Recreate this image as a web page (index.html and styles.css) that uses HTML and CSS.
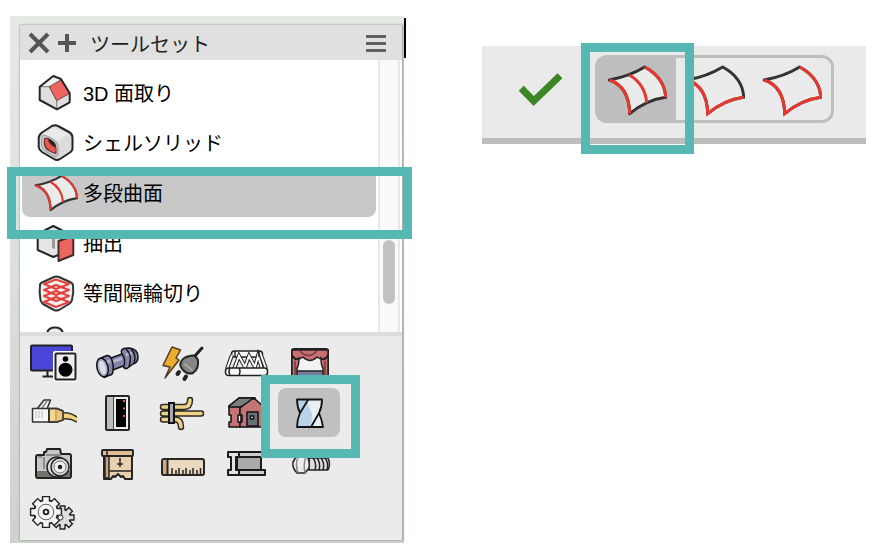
FILE: index.html
```
<!DOCTYPE html>
<html lang="ja">
<head>
    <meta charset="UTF-8">
    <meta name="viewport" content="width=device-width, initial-scale=1.0">
    <title>ツールセット</title>
    <link rel="stylesheet" href="styles.css">
</head>
<body>
    <!-- Shared surface patch outlines -->
    <svg class="sprite" aria-hidden="true">
        <symbol id="surface-multi" viewBox="0 0 60 60">
            <path d="M2.3 21Q22 17.5 37.7 8Q57.8 19 58.700 38.3Q39 41 22.7 54.7Q22 27.5 2.3 21Z" fill="#ebebeb" stroke="#333" stroke-width="3" stroke-linejoin="round"/>
            <path d="M2.3 21Q22 27.5 22.7 54.7M37.7 8Q57.8 19 58.7 38.3M22.3 16Q38 25 39.7 43.7" fill="none" stroke="#e5392f" stroke-width="3"/>
        </symbol>
        <symbol id="surface-two" viewBox="0 0 60 60">
            <path d="M2.3 21Q22 17.5 37.7 8Q57.8 19 58.7 38.3Q39 41 22.7 54.7Q22 27.5 2.3 21Z" fill="#ebebeb" stroke="#333" stroke-width="3" stroke-linejoin="round"/>
            <path d="M2.3 21Q22 27.5 22.7 54.7Q39 41 58.7 38.3" fill="none" stroke="#e5392f" stroke-width="3"/>
        </symbol>
        <symbol id="surface-three" viewBox="0 0 60 60">
            <path d="M2.3 21Q22 17.5 37.7 8Q57.8 19 58.7 38.3Q39 41 22.7 54.7Q22 27.5 2.3 21Z" fill="#ebebeb" stroke="#333" stroke-width="3" stroke-linejoin="round"/>
            <path d="M2.3 21Q22 27.5 22.7 54.7Q39 41 58.7 38.3Q57.8 19 37.7 8" fill="none" stroke="#e5392f" stroke-width="3"/>
        </symbol>
    </svg>

    <main class="page">
        <section class="palette">
            <div class="window">
                <header class="title-bar">
                    <button class="title-button" type="button" aria-label="閉じる">
                        <svg width="22" height="22" viewBox="0 0 22 22"><path d="M2 2L20 20M20 2L2 20" stroke="#555" stroke-width="4"/></svg>
                    </button>
                    <button class="title-button" type="button" aria-label="追加">
                        <svg width="18" height="18" viewBox="0 0 18 18"><path d="M9 0V18M0 9H18" stroke="#555" stroke-width="4"/></svg>
                    </button>
                    <h1>ツールセット</h1>
                    <button class="title-button menu-button" type="button" aria-label="メニュー">
                        <svg width="22" height="18" viewBox="0 0 22 18"><path d="M1 2.5H21M1 9.5H21M1 16.5H21" stroke="#606060" stroke-width="3"/></svg>
                    </button>
                </header>

                <div class="tool-area">
                    <ul class="tool-list">
                        <li><button class="tool" type="button">
                            <svg class="tool-icon" viewBox="0 0 44 44" stroke-linejoin="round">
                                <path d="M5.7 16.7L19.3 6L27 9L35.7 23.3V32.3L23 39.3L5.7 30Z" fill="#dedede"/>
                                <path d="M5.7 16.7L19.3 6L27 9L15.3 16.7Z" fill="#efefef"/>
                                <path d="M5.7 16.7H15.3L22.7 30.7V39" fill="none" stroke="#777" stroke-width="1"/>
                                <path d="M15.3 16.7L27 10L35.7 23.3L22.7 30.7Z" fill="#ee645e" stroke="#784440" stroke-width="1"/>
                                <path d="M5.7 16.7L19.3 6L27 9L35.7 23.3V32.3L23 39.3L5.7 30Z" fill="none" stroke="#252525" stroke-width="2"/>
                            </svg>
                            <span>3D 面取り</span>
                        </button></li>
                        <li><button class="tool" type="button">
                            <svg class="tool-icon" viewBox="0 0 44 44">
                                <path d="M4.7 18Q5 14.500 8 12.500L18 6Q21 4.500 24 6L35 12Q38.500 14 38.500 18V28Q38.500 31 36 32.5L26 39Q23 41 20 39L8 32Q5 30 4.7 27Z" fill="#dcdcdc" stroke="#252525" stroke-width="2"/>
                                <path d="M9 14L20 8L34 14L24 21Z" fill="#eaeaea"/>
                                <path d="M7.5 18Q8 14 13 16L19 19Q24 22 24 28V34Q24 38 19 36L11 31Q8 29 7.5 25Z" fill="#c6c6c6" stroke="#999" stroke-width="1"/>
                                <path d="M10 19Q11 17 14 18Q21 21 22 26V34L13 30Q9 26 10 19Z" fill="#222"/>
                                <path d="M10.5 18.500L14 18.500Q15 25 22 27.500V33.500Q12 31 10.5 24Z" fill="#e65750" stroke="#742f2c" stroke-width="1"/>
                            </svg>
                            <span>シェルソリッド</span>
                        </button></li>
                        <li><button class="tool selected" type="button" aria-pressed="true">
                            <svg class="tool-icon"><use href="#surface-multi"/></svg>
                            <span>多段曲面</span>
                        </button></li>
                        <li><button class="tool" type="button">
                            <svg class="tool-icon" viewBox="0 0 44 44" stroke-linejoin="round">
                                <path d="M3.7 14L19.3 6L35 14V32L19.3 37L3.7 30Z" fill="#e5e5e5"/>
                                <path d="M18 15H21V29L18 28Z" fill="#999"/>
                                <path d="M24 35L19.3 37L3.7 30V14L19.3 6L35 14" fill="none" stroke="#252525" stroke-width="2"/>
                                <path d="M24.5 21L39.3 16V35L24.5 41Z" fill="#ee645e" stroke="#402c2c" stroke-width="2"/>
                            </svg>
                            <span>抽出</span>
                        </button></li>
                        <li><button class="tool" type="button">
                            <svg class="tool-icon" viewBox="0 0 44 44" stroke-linejoin="round">
                                <path d="M6 15Q6 13 9 12L20 7Q22 6 25 7L36 12Q38.5 13 39 15Q40 22 38 30Q37.5 32 35 34L25 40Q22 41 20 40L9 34Q7 32 6.5 30Q5 22 6 15Z" fill="#eee" stroke="#333" stroke-width="2"/>
                                <g fill="none" stroke="#e2413b" stroke-width="2">
                                    <path d="M10 14L22 9.5L35 14L22 19Z"/>
                                    <path d="M10 20L22 15L35 20L22 25Z"/>
                                    <path d="M10 26L22 21L35 26L22 31Z"/>
                                    <path d="M10 32L22 27L35 32L22 37Z"/>
                                </g>
                            </svg>
                            <span>等間隔輪切り</span>
                        </button></li>
                        <li><button class="tool" type="button" aria-label="次のツール">
                            <svg class="tool-icon" viewBox="0 0 44 44"><path d="M13 15Q13 7.5 21 7.5Q29 7.5 29 15" fill="#eee" stroke="#252525" stroke-width="2"/></svg>
                        </button></li>
                    </ul>
                    <div class="scroll-track"><div class="scroll-thumb"></div></div>
                </div>

                <div class="toolsets">
                    <button class="toolset" type="button" aria-label="映像と音響">
                        <svg width="48" height="40" viewBox="0 0 48 40">
                            <rect x="2" y="3.500" width="41" height="25" rx="1" fill="#4a46d8" stroke="#222" stroke-width="2"/>
                            <path d="M18.500 29V34.5M13.5 34.5H25" stroke="#222" stroke-width="2"/>
                            <rect x="24" y="9" width="24" height="31" rx="2" fill="#fff"/>
                            <rect x="26.500" y="11.500" width="20" height="26" rx="1" fill="#eee" stroke="#222" stroke-width="2"/>
                            <circle cx="36.5" cy="17" r="2.8"/><circle cx="36.5" cy="27.700" r="7"/>
                        </svg>
                    </button>
                    <button class="toolset" type="button" aria-label="配管">
                        <svg width="48" height="40" viewBox="0 0 48 40" stroke="#111" stroke-width="1.5" stroke-linejoin="round">
                            <path d="M8 16L14 13.500Q17 13.500 18 16L29 12Q27 8 31 6.500L36 6Q45 7 45 15Q45 21 40 22L34 26.500Q31 27 30 24L20 28Q20 33 17 33L11 35.500Z" fill="#8384aa"/>
                            <path d="M19 20L29 16.500M14 20L17 19M33 13L39 11" stroke="#b3b4cd" stroke-width="3" fill="none"/>
                            <path d="M18 16Q21 22 20 28M29 12Q33 17 31 24M33 7Q40 13 36 25M38 7Q44 13 41 21" fill="none"/>
                            <ellipse cx="9.500" cy="25.5" rx="5.5" ry="9.5" transform="rotate(-14 9.500 25.5)" fill="#a9aac4"/>
                            <ellipse cx="9.500" cy="25.5" rx="3" ry="7" transform="rotate(-14 9.500 25.5)" fill="#dddde9" stroke="none"/>
                        </svg>
                    </button>
                    <button class="toolset" type="button" aria-label="電気">
                        <svg width="48" height="40" viewBox="0 0 48 40" stroke-linejoin="round" stroke-linecap="round">
                            <path d="M15 5L23.5 8L19 16L22 18L8 36L13 25L6 23.500Z" fill="#edac2d" stroke="#4d3d20" stroke-width="1.5"/>
                            <path d="M37 15L45 6" fill="none" stroke="#222" stroke-width="3"/>
                            <path d="M33 14Q38 12 41 18Q42 27 36 31Q31 33 26 28Q22 24 24 20Q26 15 33 14Z" fill="#858585" stroke="#252525" stroke-width="2"/>
                            <path d="M28 22L35 28" fill="none" stroke="#b5b5b5" stroke-width="1.5"/>
                            <path d="M22 30L20.500 32M29 34.500L27.5 37" stroke="#222" stroke-width="4"/>
                        </svg>
                    </button>
                    <button class="toolset" type="button" aria-label="トラス">
                        <svg width="48" height="40" viewBox="0 0 48 40" fill="#f8f8f8" stroke="#222" stroke-width="1.5">
                            <rect x="10.500" y="9" width="31" height="6" rx="3"/>
                            <path d="M11 13L6 27M40 13L45 27M13 27L18 14L24 25L28 14L34 25L37 14L41 27" fill="none" stroke-width="4"/>
                            <path d="M11 13L6 27M40 13L45 27M13 27L18 14L24 25L28 14L34 25L37 14L41 27" fill="none" stroke="#fff" stroke-width="2"/>
                            <rect x="4.500" y="26" width="42" height="7.500" rx="3"/>
                            <path d="M9 26Q7 29 9 33M18 26Q20 29 18 33M14 9V15M38 9V15" fill="none"/>
                        </svg>
                    </button>
                    <button class="toolset" type="button" aria-label="舞台">
                        <svg width="48" height="40" viewBox="0 0 48 40" stroke="#222" stroke-width="1.5">
                            <rect x="7" y="7" width="36" height="31" rx="2" fill="#f3f3f3" stroke-width="2"/>
                            <path d="M10 29H40V38H10Z" fill="#787a9d"/>
                            <path d="M7 8H43V13Q39 20 32 15Q25 22 18 15Q11 20 7 13Z" fill="#c96f72"/>
                            <path d="M7 13Q10 20 14 16Q14 23 12 26V38H7ZM43 13Q40 20 36 16Q36 23 38 26V38H43Z" fill="#c96f72"/>
                            <path d="M15 9Q23 18 32 9M10 19V35M40 19V35" fill="none" stroke="#713c40"/>
                        </svg>
                    </button>
                    <button class="toolset" type="button" aria-label="ネットワーク">
                        <svg width="48" height="40" viewBox="0 0 48 40" stroke="#333" stroke-width="1.5" stroke-linejoin="round">
                            <path d="M34 20Q40 19 48 24V29Q41 25 34 26Z" fill="#f0d47b" stroke="none"/>
                            <path d="M34 20Q40 19 48 24M34 26Q41 25 48 29" fill="none"/>
                            <path d="M8 16L15 7L21.5 7L18 16Z" fill="#eee"/>
                            <path d="M13 15L18 8" stroke="#888"/>
                            <path d="M3.5 15.5H20V29H3.5Z" fill="#f6f6f6"/>
                            <path d="M7 18V25M10 18V25M13 18V25" stroke="#bbb" stroke-width="1"/>
                            <path d="M20 15.5H28L34 18V27L28 29H20Z" fill="#f0d88c"/>
                            <path d="M27 16V29L34 27V18Z" fill="#eac581" stroke="#c79c55"/>
                            <path d="M20 15.5H28L34 18V27L28 29H20Z" fill="none"/>
                        </svg>
                    </button>
                    <button class="toolset" type="button" aria-label="ラック">
                        <svg width="48" height="40" viewBox="0 0 48 40">
                            <rect x="13" y="3" width="23" height="34" rx="1" fill="#eee" stroke="#252525" stroke-width="2"/>
                            <path d="M14 4H20V36H14Z" fill="#bdbdbd"/><path d="M20.5 4V36" stroke="#444"/>
                            <rect x="23" y="6" width="10" height="28"/>
                            <path d="M30 8H32M30 15.5H32M30 23H32" stroke="#e84b4b" stroke-width="2"/>
                        </svg>
                    </button>
                    <button class="toolset" type="button" aria-label="ケーブル">
                        <svg width="48" height="40" viewBox="0 0 48 40" fill="none" stroke-linecap="round">
                            <path d="M6 14H27Q33 14 33 7M6 20.5H44M6 26.5H18Q24 26.5 24 34" stroke="#2e2a24" stroke-width="6.5"/>
                            <path d="M6 14H27Q33 14 33 7M6 20.5H44M6 26.5H18Q24 26.5 24 34" stroke="#efd28a" stroke-width="3.5"/>
                            <rect x="12" y="10" width="5" height="20" fill="#aaa" stroke="#111" stroke-width="2"/>
                        </svg>
                    </button>
                    <button class="toolset" type="button" aria-label="建築">
                        <svg width="48" height="40" viewBox="0 0 48 40" stroke="#111" stroke-width="1.5" stroke-linejoin="round">
                            <path d="M8 13L18 5H34L25 13H19V34H8V29H10V22H8Z" fill="#c47475"/>
                            <path d="M8 13L18 5H34L24 12L19 14H8Z" fill="#777f84"/>
                            <path d="M19 15L31 6H34L44 15V34H19V29H21V22H19Z" fill="#c47475"/>
                            <rect x="26" y="19" width="11" height="14" fill="#687276"/>
                            <rect x="29.5" y="23" width="3" height="3" fill="#fff"/>
                            <path d="M17 22H20V29H17Z" fill="#eee"/>
                        </svg>
                    </button>
                    <button class="toolset active" type="button" aria-pressed="true" aria-label="モデリング">
                        <svg width="48" height="40" viewBox="0 0 48 40" stroke-linejoin="round">
                            <path d="M12 6.5H37Q37 14 34 20Q37 27 38 34H12Q12 27 15 20Q12 14 12 6.5Z" fill="#e8eff5"/>
                            <path d="M12 6.5H23L15 20Q12 14 12 6.5ZM15 20L23 9Q23 14 26 18Q29 24 25 34H12Q12 27 15 20Z" fill="#bad2e9"/>
                            <path d="M23 7L15 20M34 20L26 34M12 6.5H37Q37 14 34 20Q37 27 38 34H12Q12 27 15 20Q12 14 12 6.5Z" fill="none" stroke="#111" stroke-width="1.8"/>
                        </svg>
                        <span class="highlight highlight-toolset"></span>
                    </button>
                    <button class="toolset" type="button" aria-label="カメラ">
                        <svg width="48" height="40" viewBox="0 0 48 40" stroke="#222" stroke-width="1.5" stroke-linejoin="round">
                            <path d="M7 13Q7 11 9 11H15V8H17L18 5H31L32 10H40Q42 10 42 12V32Q42 34 40 34H9Q7 34 7 32Z" fill="#c8c8c8" stroke-width="2"/>
                            <path d="M8 27H41V33H8Z" fill="#77716c" stroke="none"/>
                            <path d="M17 11H32M15 13V25M9 13H13" fill="none" stroke="#777"/>
                            <circle cx="28" cy="23" r="10" fill="#ddd"/><circle cx="31" cy="23" r="9" fill="#d8d8d8"/><circle cx="31" cy="23" r="6" fill="#eee" stroke="#777" stroke-width="1"/>
                            <circle cx="31" cy="23" r="1.5" fill="#111"/>
                        </svg>
                    </button>
                    <button class="toolset" type="button" aria-label="家具">
                        <svg width="48" height="40" viewBox="0 0 48 40" stroke="#252525" stroke-width="1.5" stroke-linejoin="round">
                            <path d="M11 11H39V35H32L30 32L28 33L25 30L22 33L20 32L18 35H11Z" fill="#e9d1b0" stroke-width="2"/>
                            <path d="M12 12H16V34H12Z" fill="#cda783"/><path d="M16 27H38M27 14V23M24 20H30" fill="none"/>
                            <rect x="9" y="6" width="31" height="6" rx="1" fill="#e1bd95" stroke-width="2"/>
                            <path d="M14 6V12" fill="none"/>
                        </svg>
                    </button>
                    <button class="toolset" type="button" aria-label="寸法">
                        <svg width="48" height="40" viewBox="0 0 48 40" stroke="#292522" stroke-width="1.5">
                            <rect x="5" y="15" width="42" height="16" rx="2" fill="#ead8c1" stroke-width="2"/>
                            <path d="M6 16H10V30H6Z" fill="#d2ad7d" stroke="none"/><path d="M10.5 15V31" stroke-width="2"/>
                            <path d="M15 24V30M19 26V30M22 24V30M26 26V30M29 24V30M33 26V30M36 24V30M40 26V30M43.5 24V30"/>
                        </svg>
                    </button>
                    <button class="toolset" type="button" aria-label="鋼材">
                        <svg width="48" height="40" viewBox="0 0 48 40" stroke="#1b1b1b" stroke-width="2" stroke-linejoin="round">
                            <path d="M16 12H40V27H16Z" fill="#aaa"/>
                            <path d="M18 8H42V13H18ZM18 26H44V31H18Z" fill="#cdcdcd"/>
                            <path d="M7 8H18V13H15V26H18V31H7V26H10V13H7Z" fill="#e2e2e2"/>
                        </svg>
                    </button>
                    <button class="toolset" type="button" aria-label="ボルト">
                        <svg width="48" height="40" viewBox="0 0 48 40" stroke="#222" stroke-width="1.5" stroke-linejoin="round">
                            <path d="M24 14H43Q46 20 43 26H24Z" fill="#ddd"/>
                            <path d="M28 14Q32 19 30 26M32 14Q36 19 34 26M36 14Q40 19 38 26M40 14Q44 19 42 26" fill="none"/>
                            <path d="M11 13L22 12Q25 17 24 24L20 29H12Q7 24 8 18Z" fill="#ededed"/>
                            <path d="M13 13Q10 20 13 29M21 13Q18 20 20 29" fill="none" stroke="#888"/>
                        </svg>
                    </button>
                    <button class="toolset" type="button" aria-label="機械">
                        <svg width="48" height="40" viewBox="0 0 48 40">
                            <g transform="translate(33.500 22.500) scale(.9)">
                                <path d="M-2 -12H2V12H-2ZM-12 -2H12V2H-12ZM-10 -7L-7 -10L10 7L7 10ZM7 -10L10 -7L-7 10L-10 7Z" fill="#ddd" stroke="#222" stroke-width="3"/>
                                <circle r="9" fill="#ddd" stroke="#222" stroke-width="2"/>
                                <path d="M-2 -12H2V12H-2ZM-12 -2H12V2H-12ZM-10 -7L-7 -10L10 7L7 10ZM7 -10L10 -7L-7 10L-10 7Z" fill="#ddd"/>
                            </g>
                            <g transform="translate(17 17) scale(.92)">
                                <path d="M-3 -16H3V16H-3ZM-16 -3H16V3H-16ZM-13.5 -9L-9 -13.5L13.5 9L9 13.5ZM9 -13.5L13.5 -9L-9 13.5L-13.5 9Z" fill="#f5f5f5" stroke="#222" stroke-width="3"/>
                                <circle r="13" fill="#f5f5f5" stroke="#222" stroke-width="2"/>
                                <path d="M-3 -16H3V16H-3ZM-16 -3H16V3H-16ZM-13.5 -9L-9 -13.5L13.5 9L9 13.5ZM9 -13.5L13.5 -9L-9 13.5L-13.5 9Z" fill="#f5f5f5"/>
                                <circle r="8.500" fill="none" stroke="#555"/><circle r="2.5" fill="#fff" stroke="#222" stroke-width="2"/>
                            </g>
                            <circle cx="31.500" cy="22.500" r="2.500" fill="#eee" stroke="#333"/>
                        </svg>
                    </button>
                </div>
            </div>
            <span class="highlight highlight-row"></span>
            <span class="text-caret"></span>
        </section>

        <section class="mode-bar">
            <button class="confirm" type="button" aria-label="確定">
                <svg width="44" height="36" viewBox="0 0 44 36"><path d="M2.3 17.3L14.7 30L41 4.7" fill="none" stroke="#3c8723" stroke-width="7"/></svg>
            </button>
            <div class="modes">
                <button class="mode current" type="button" aria-pressed="true" aria-label="多段曲面モード">
                    <svg width="60" height="60"><use href="#surface-multi"/></svg>
                    <span class="highlight highlight-mode"></span>
                </button>
                <button class="mode" type="button" aria-label="2辺モード">
                    <svg width="60" height="60"><use href="#surface-two"/></svg>
                </button>
                <button class="mode" type="button" aria-label="3辺モード">
                    <svg width="60" height="60"><use href="#surface-three"/></svg>
                </button>
            </div>
        </section>
    </main>
</body>
</html>
```
FILE: styles.css
```
* {
    box-sizing: border-box;
}

body {
    margin: 0;
    background: #fff;
    color: #000;
    font-family: "Liberation Sans", "Noto Sans CJK JP", sans-serif;
    font-size: 20px;
}

button {
    margin: 0;
    padding: 0;
    border: none;
    background: none;
    color: inherit;
    font: inherit;
    cursor: pointer;
}

svg {
    display: block;
    flex: none;
}

.sprite {
    position: absolute;
    width: 0;
    height: 0;
}

.page {
    display: grid;
    grid-template-columns: 394fr 384fr;
    gap: 78px;
    align-items: start;
    padding: 16px 10px 5px;
}

/* Teal marker frames */
.highlight {
    position: absolute;
    z-index: 2;
    border: 9px solid #55b8b3;
    pointer-events: none;
}

.highlight-row {
    top: 151px;
    left: -3px;
    right: -8px;
    height: 72px;
}

.highlight-toolset {
    inset: -13px -20px -21px -17px;
}

.highlight-mode {
    inset: -15px -18px -34px -17px;
}

/* Tool palette */
.palette {
    position: relative;
    padding: 9px 1px 3px 10px;
    background: linear-gradient(#e5ebe4, #d9e0d9 50%, #ccd3ca);
}

.text-caret {
    position: absolute;
    top: 2px;
    left: 100%;
    width: 2px;
    height: 40px;
    background: #000;
}

.window {
    border-right: 1px solid #a9afa9;
    background: #ebebeb;
    box-shadow: 0 0 2px #7d857d;
}

.title-bar {
    display: flex;
    align-items: center;
    gap: 8px;
    height: 35px;
    padding: 0 15px 0 8px;
    background: #e0e0e0;
}

.title-bar h1 {
    margin: 0 0 0 6px;
    padding-top: 4px;
    color: #222;
    font-size: 20px;
    font-weight: 400;
    line-height: 30px;
}

.menu-button {
    margin-left: auto;
}

.tool-area {
    display: flex;
    height: 276px;
    overflow: hidden;
    border-bottom: 4px solid #dcdcdc;
    background: #fff;
}

.tool-list {
    flex: 1;
    margin: 0;
    padding: 7px 2px 0;
    list-style: none;
}

.tool {
    display: flex;
    align-items: center;
    gap: 5px;
    width: 100%;
    height: 50px;
    padding: 0 12px;
    border-radius: 8px;
    line-height: 30px;
    text-align: left;
}

.tool span {
    padding-top: 4px;
}

.tool.selected {
    background: #c8c8c8;
}

.tool-icon {
    width: 44px;
    height: 44px;
}

.scroll-track {
    width: 22px;
    margin-right: 2px;
    border: solid #e8e8e8;
    border-width: 0 2px;
    background: #fafafa;
}

.scroll-thumb {
    width: 12px;
    height: 64px;
    margin: 180px auto 0;
    border-radius: 6px;
    background: #c2c2c2;
}

.toolsets {
    display: grid;
    grid-template-columns: repeat(auto-fill, 64px);
    grid-auto-rows: 51px;
    padding: 0 1px;
}

.toolset {
    position: relative;
    display: flex;
    align-items: center;
    justify-content: center;
    margin: 1px;
    border-radius: 8px;
}

.toolset.active {
    background: #c0c0c0;
}

/* Mode bar */
.mode-bar {
    display: flex;
    align-items: center;
    gap: 32px;
    margin-top: 30px;
    padding: 9px 32px 15px 37px;
    border-bottom: 6px solid #bebebe;
    background: #eaeaea;
}

.modes {
    display: flex;
    flex: 1;
    border: 3px solid #bebebe;
    border-radius: 12px;
}

.mode {
    position: relative;
    display: flex;
    flex: 1;
    align-items: center;
    justify-content: center;
    height: 62px;
}

.mode.current {
    background: #bebebe;
}
```
